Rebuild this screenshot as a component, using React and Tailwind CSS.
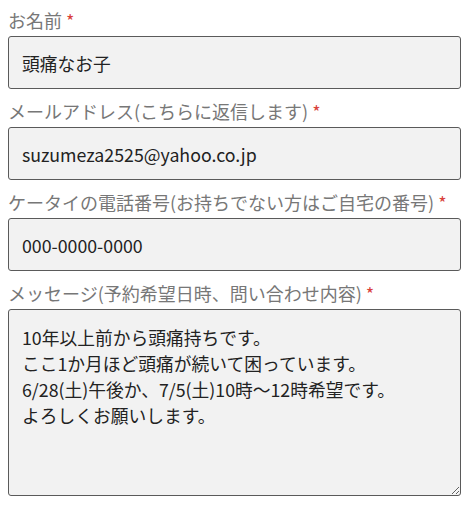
import React from "react";

const fields = [
  { label: "お名前", value: "頭痛なお子" },
  { label: "メールアドレス(こちらに返信します)", value: "suzumeza2525@yahoo.co.jp" },
  { label: "ケータイの電話番号(お持ちでない方はご自宅の番号)", value: "000-0000-0000" },
];

const message =
  "10年以上前から頭痛持ちです。\nここ1か月ほど頭痛が続いて困っています。\n6/28(土)午後か、7/5(土)10時～12時希望です。\nよろしくお願いします。";

function Label({ children }) {
  return (
    <label className="block text-[18px] leading-[25px] text-[#777]">
      {children}
      <span className="ml-1 text-[#d9413b]">*</span>
    </label>
  );
}

export default function App() {
  return (
    <div
      className="min-h-screen bg-white px-2 pt-2"
      style={{ fontFamily: '"Noto Sans CJK JP", "Noto Sans", sans-serif' }}
    >
      <div className="flex flex-col gap-[10px]">
        {fields.map((f) => (
          <div key={f.label} className="flex flex-col gap-[3px]">
            <Label>{f.label}</Label>
            <input
              readOnly
              value={f.value}
              className="h-[53px] w-full rounded-[3px] border border-[#5a5a5a] bg-[#f2f2f2] px-[13px] text-[17.75px] text-[#222] outline-none"
            />
          </div>
        ))}
        <div className="flex flex-col gap-[3px]">
          <Label>メッセージ(予約希望日時、問い合わせ内容)</Label>
          <textarea
            readOnly
            defaultValue={message}
            className="h-[187px] w-full resize-y rounded-[3px] border border-[#5a5a5a] bg-[#f2f2f2] px-[13px] pt-[14px] text-[17.75px] leading-[26px] text-[#222] outline-none"
          />
        </div>
      </div>
    </div>
  );
}
